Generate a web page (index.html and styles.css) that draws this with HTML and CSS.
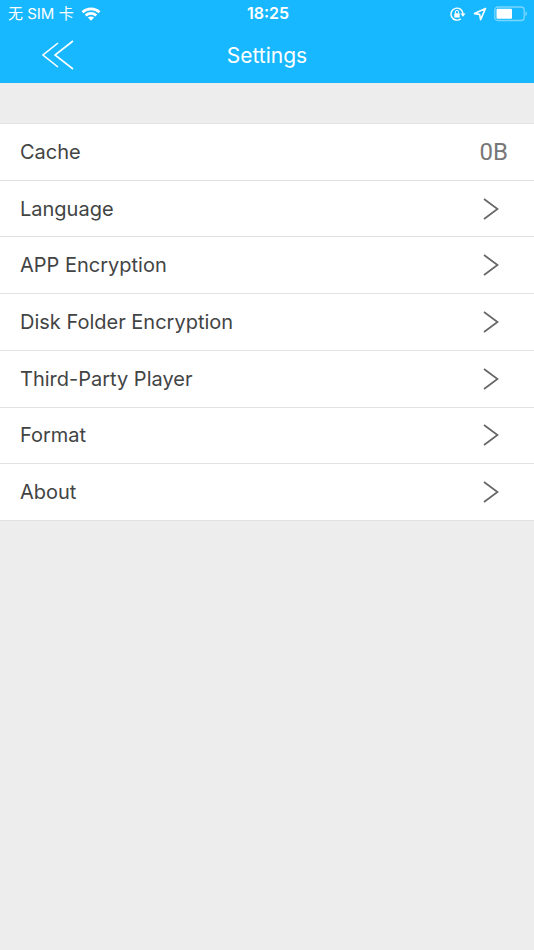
FILE: index.html
```html
<!DOCTYPE html>
<html lang="en">
<head>
<meta charset="utf-8">
<meta name="viewport" content="width=device-width, initial-scale=1">
<title>Settings</title>
<link rel="stylesheet" href="styles.css">
</head>
<body>
<header class="header">
  <div class="status">
    <div class="status-left">
      <span lang="zh">无 SIM 卡</span>
      <svg width="20" height="14" viewBox="0 0 20 14" aria-hidden="true">
        <g fill="none" stroke="#fff" stroke-width="2.6">
          <path d="M1.500 5.200C6.300 .7 13.700 .7 18.500 5.200"/>
          <path d="M4.700 8.500C7.700 5.700 12.300 5.700 15.300 8.500"/>
        </g>
        <path d="M6.900 10.600C8.700 9 11.300 9 13.100 10.600L10 13.700Z" fill="#fff"/>
      </svg>
    </div>
    <time class="clock">18:25</time>
    <div class="status-right">
      <svg width="16" height="14" viewBox="0 0 16 14" aria-hidden="true">
        <path d="M10.800 11.800A6 6 0 1 1 13 7" fill="none" stroke="#fff" stroke-width="1.400"/>
        <path d="M10.400 6.400H15.600L13 9.800Z" fill="#fff"/>
        <rect x="4.300" y="6.200" width="5.400" height="4.200" rx=".5" fill="#fff"/>
        <path d="M5.400 6.500V5a1.600 1.600 0 0 1 3.200 0V6.500" fill="none" stroke="#fff" stroke-width="1"/>
      </svg>
      <svg width="14" height="14" viewBox="0 0 14 14" aria-hidden="true">
        <path d="M12.500 1.500L1.500 6.600L6.600 7.400L7.600 12.600Z" fill="none" stroke="#fff" stroke-width="1.600" stroke-linejoin="round"/>
      </svg>
      <svg width="34" height="16" viewBox="0 0 34 16" aria-hidden="true">
        <rect x=".8" y="1" width="29.400" height="13.500" rx="3" fill="none" stroke="#7ad6ff" stroke-width="1.300"/>
        <rect x="2.500" y="2.700" width="15.500" height="10.100" rx="1" fill="#fff"/>
        <path d="M31.500 5.300C33.500 6.200 33.500 9.300 31.500 10.200Z" fill="#7ad6ff"/>
      </svg>
    </div>
  </div>
  <div class="nav">
    <button class="back" type="button" aria-label="Back">
      <svg width="32" height="30" viewBox="0 0 32 30" aria-hidden="true">
        <path d="M16 3L1 15L16 27M31 1L13 15L31 29" fill="none" stroke="#fff" stroke-width="1.600"/>
      </svg>
    </button>
    <h1 class="title">Settings</h1>
  </div>
</header>
<main>
  <ul class="list">
    <li class="item"><div class="row"><span>Cache</span><span class="value">0B</span></div></li>
    <li class="item"><a class="row" href="#language">Language<svg class="chevron" viewBox="0 0 16 22" aria-hidden="true"><path d="M1 1L14.500 11L1 21"/></svg></a></li>
    <li class="item"><a class="row" href="#app-encryption">APP Encryption<svg class="chevron" viewBox="0 0 16 22" aria-hidden="true"><path d="M1 1L14.500 11L1 21"/></svg></a></li>
    <li class="item"><a class="row" href="#disk-folder-encryption">Disk Folder Encryption<svg class="chevron" viewBox="0 0 16 22" aria-hidden="true"><path d="M1 1L14.500 11L1 21"/></svg></a></li>
    <li class="item"><a class="row" href="#third-party-player">Third-Party Player<svg class="chevron" viewBox="0 0 16 22" aria-hidden="true"><path d="M1 1L14.500 11L1 21"/></svg></a></li>
    <li class="item"><a class="row" href="#format">Format<svg class="chevron" viewBox="0 0 16 22" aria-hidden="true"><path d="M1 1L14.500 11L1 21"/></svg></a></li>
    <li class="item"><a class="row" href="#about">About<svg class="chevron" viewBox="0 0 16 22" aria-hidden="true"><path d="M1 1L14.500 11L1 21"/></svg></a></li>
  </ul>
</main>
</body>
</html>
```
FILE: styles.css
```css
* {
  box-sizing: border-box;
}

body {
  margin: 0;
  background: #ededed;
  color: #424444;
  font-family: Inter, "Noto Sans CJK SC", sans-serif;
  font-size: 20px;
}

svg {
  display: block;
  flex: none;
}

.header {
  background: #17b8ff;
  color: #fff;
}

.status {
  display: grid;
  grid-template-columns: 1fr auto 1fr;
  align-items: center;
  height: 27px;
  padding: 0 6px 0 8px;
  font-size: 15px;
  line-height: 27px;
}

.status-left,
.status-right {
  display: flex;
  align-items: center;
  gap: 7px;
}

.status-right {
  justify-content: flex-end;
}

.clock {
  font-size: 16px;
  font-weight: 600;
}

.nav {
  display: grid;
  grid-template-columns: 1fr auto 1fr;
  align-items: center;
  height: 56px;
}

.back {
  justify-self: start;
  margin-left: 42px;
  padding: 0;
  border: 0;
  background: none;
}

.title {
  margin: 0;
  font-size: 21px;
  font-weight: 400;
}

.list {
  display: grid;
  grid-auto-rows: 1fr;
  min-height: 398px;
  margin: 40px 0 0;
  padding: 0;
  border-top: 1px solid #e2e2e2;
  list-style: none;
}

.item {
  display: grid;
  border-bottom: 1px solid #e2e2e2;
  background: #fff;
}

.row {
  display: flex;
  align-items: center;
  justify-content: space-between;
  padding: 0 35px 0 20px;
  color: inherit;
  text-decoration: none;
}

.value {
  margin-right: -9px;
  color: #777;
  font-family: Roboto, sans-serif;
  font-size: 24px;
}

.chevron {
  width: 16px;
  height: 22px;
  fill: none;
  stroke: #666;
  stroke-width: 1.7px;
}
```
